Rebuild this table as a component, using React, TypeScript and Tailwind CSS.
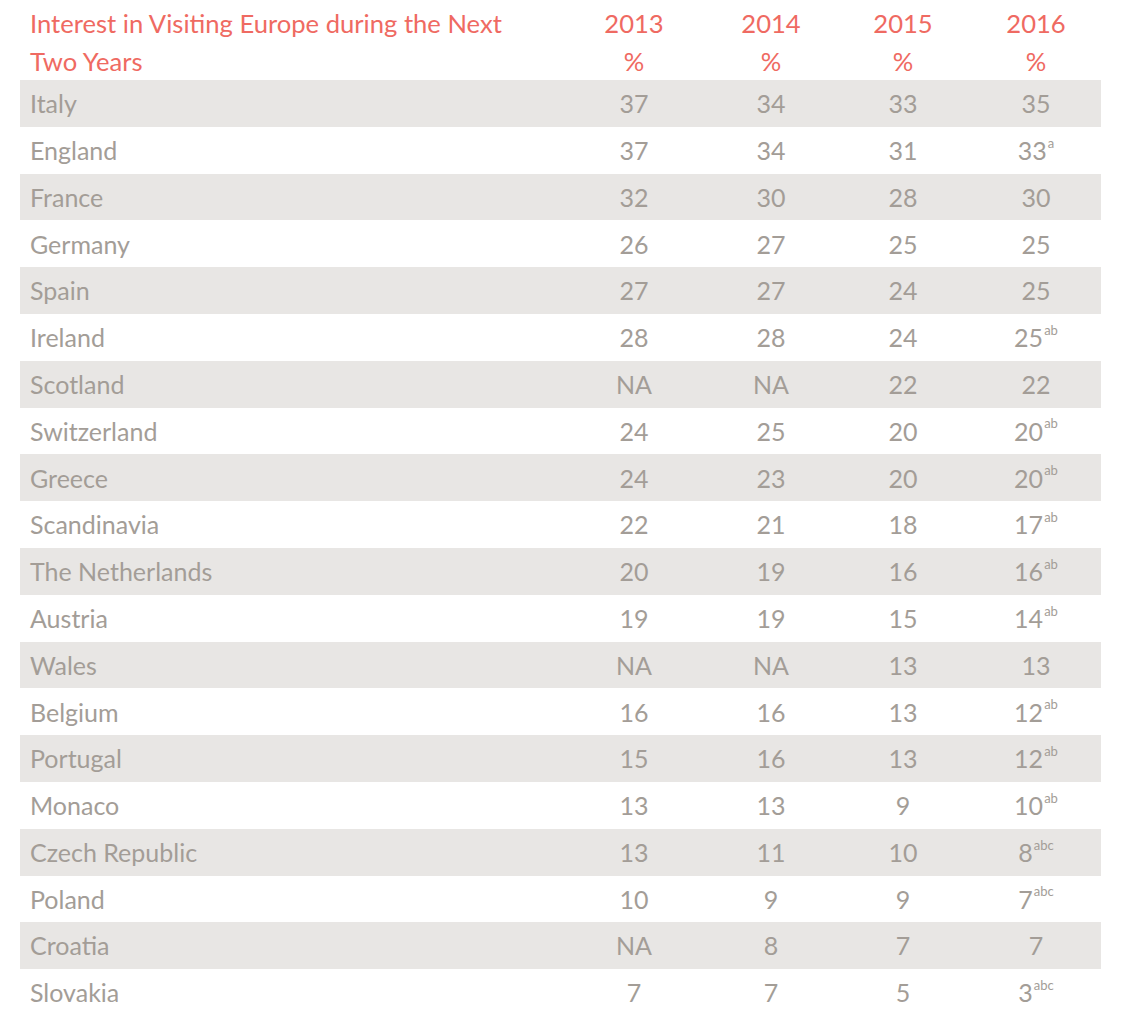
const rows: [string, string, string, string, string, string?][] = [
  ['Italy', '37', '34', '33', '35'],
  ['England', '37', '34', '31', '33', 'a'],
  ['France', '32', '30', '28', '30'],
  ['Germany', '26', '27', '25', '25'],
  ['Spain', '27', '27', '24', '25'],
  ['Ireland', '28', '28', '24', '25', 'ab'],
  ['Scotland', 'NA', 'NA', '22', '22'],
  ['Switzerland', '24', '25', '20', '20', 'ab'],
  ['Greece', '24', '23', '20', '20', 'ab'],
  ['Scandinavia', '22', '21', '18', '17', 'ab'],
  ['The Netherlands', '20', '19', '16', '16', 'ab'],
  ['Austria', '19', '19', '15', '14', 'ab'],
  ['Wales', 'NA', 'NA', '13', '13'],
  ['Belgium', '16', '16', '13', '12', 'ab'],
  ['Portugal', '15', '16', '13', '12', 'ab'],
  ['Monaco', '13', '13', '9', '10', 'ab'],
  ['Czech Republic', '13', '11', '10', '8', 'abc'],
  ['Poland', '10', '9', '9', '7', 'abc'],
  ['Croatia', 'NA', '8', '7', '7'],
  ['Slovakia', '7', '7', '5', '3', 'abc'],
];

const cols = 'grid grid-cols-[546px_136px_138px_126px_1fr]';

export default function App() {
  return (
    <div
      className="w-[1128px] h-[1024px] bg-white pl-[20px] pr-[27px]"
      style={{ fontFamily: 'Lato, "Noto Sans", sans-serif' }}
    >
      {/* header */}
      <div className={`${cols} pt-[4px] h-[80px] text-[25.6px] leading-[38px] text-[#ef6a62]`}>
        <div className="pl-[10px]">
          Interest in Visiting Europe during the Next
          <br />
          Two Years
        </div>
        {['2013', '2014', '2015', '2016'].map((y, i) => (
          <div key={y} className={`text-center ${i === 3 ? 'pl-[5px]' : ''}`}>
            {y}
            <br />%
          </div>
        ))}
      </div>

      {/* body */}
      {rows.map((r, idx) => (
        <div
          key={r[0]}
          className={`${cols} h-[46.8px] items-center pt-[1px] text-[25px] text-[#a39d97] ${idx % 2 === 0 ? 'bg-[#e8e6e4]' : 'bg-white'}`}
        >
          <div className="pl-[10px]">{r[0]}</div>
          <div className="text-center">{r[1]}</div>
          <div className="text-center">{r[2]}</div>
          <div className="text-center">{r[3]}</div>
          <div className="text-center pl-[5px]">
            {r[4]}
            {r[5] && <sup className="text-[13px] top-[-0.95em] ml-[1px]">{r[5]}</sup>}
          </div>
        </div>
      ))}
    </div>
  );
}
